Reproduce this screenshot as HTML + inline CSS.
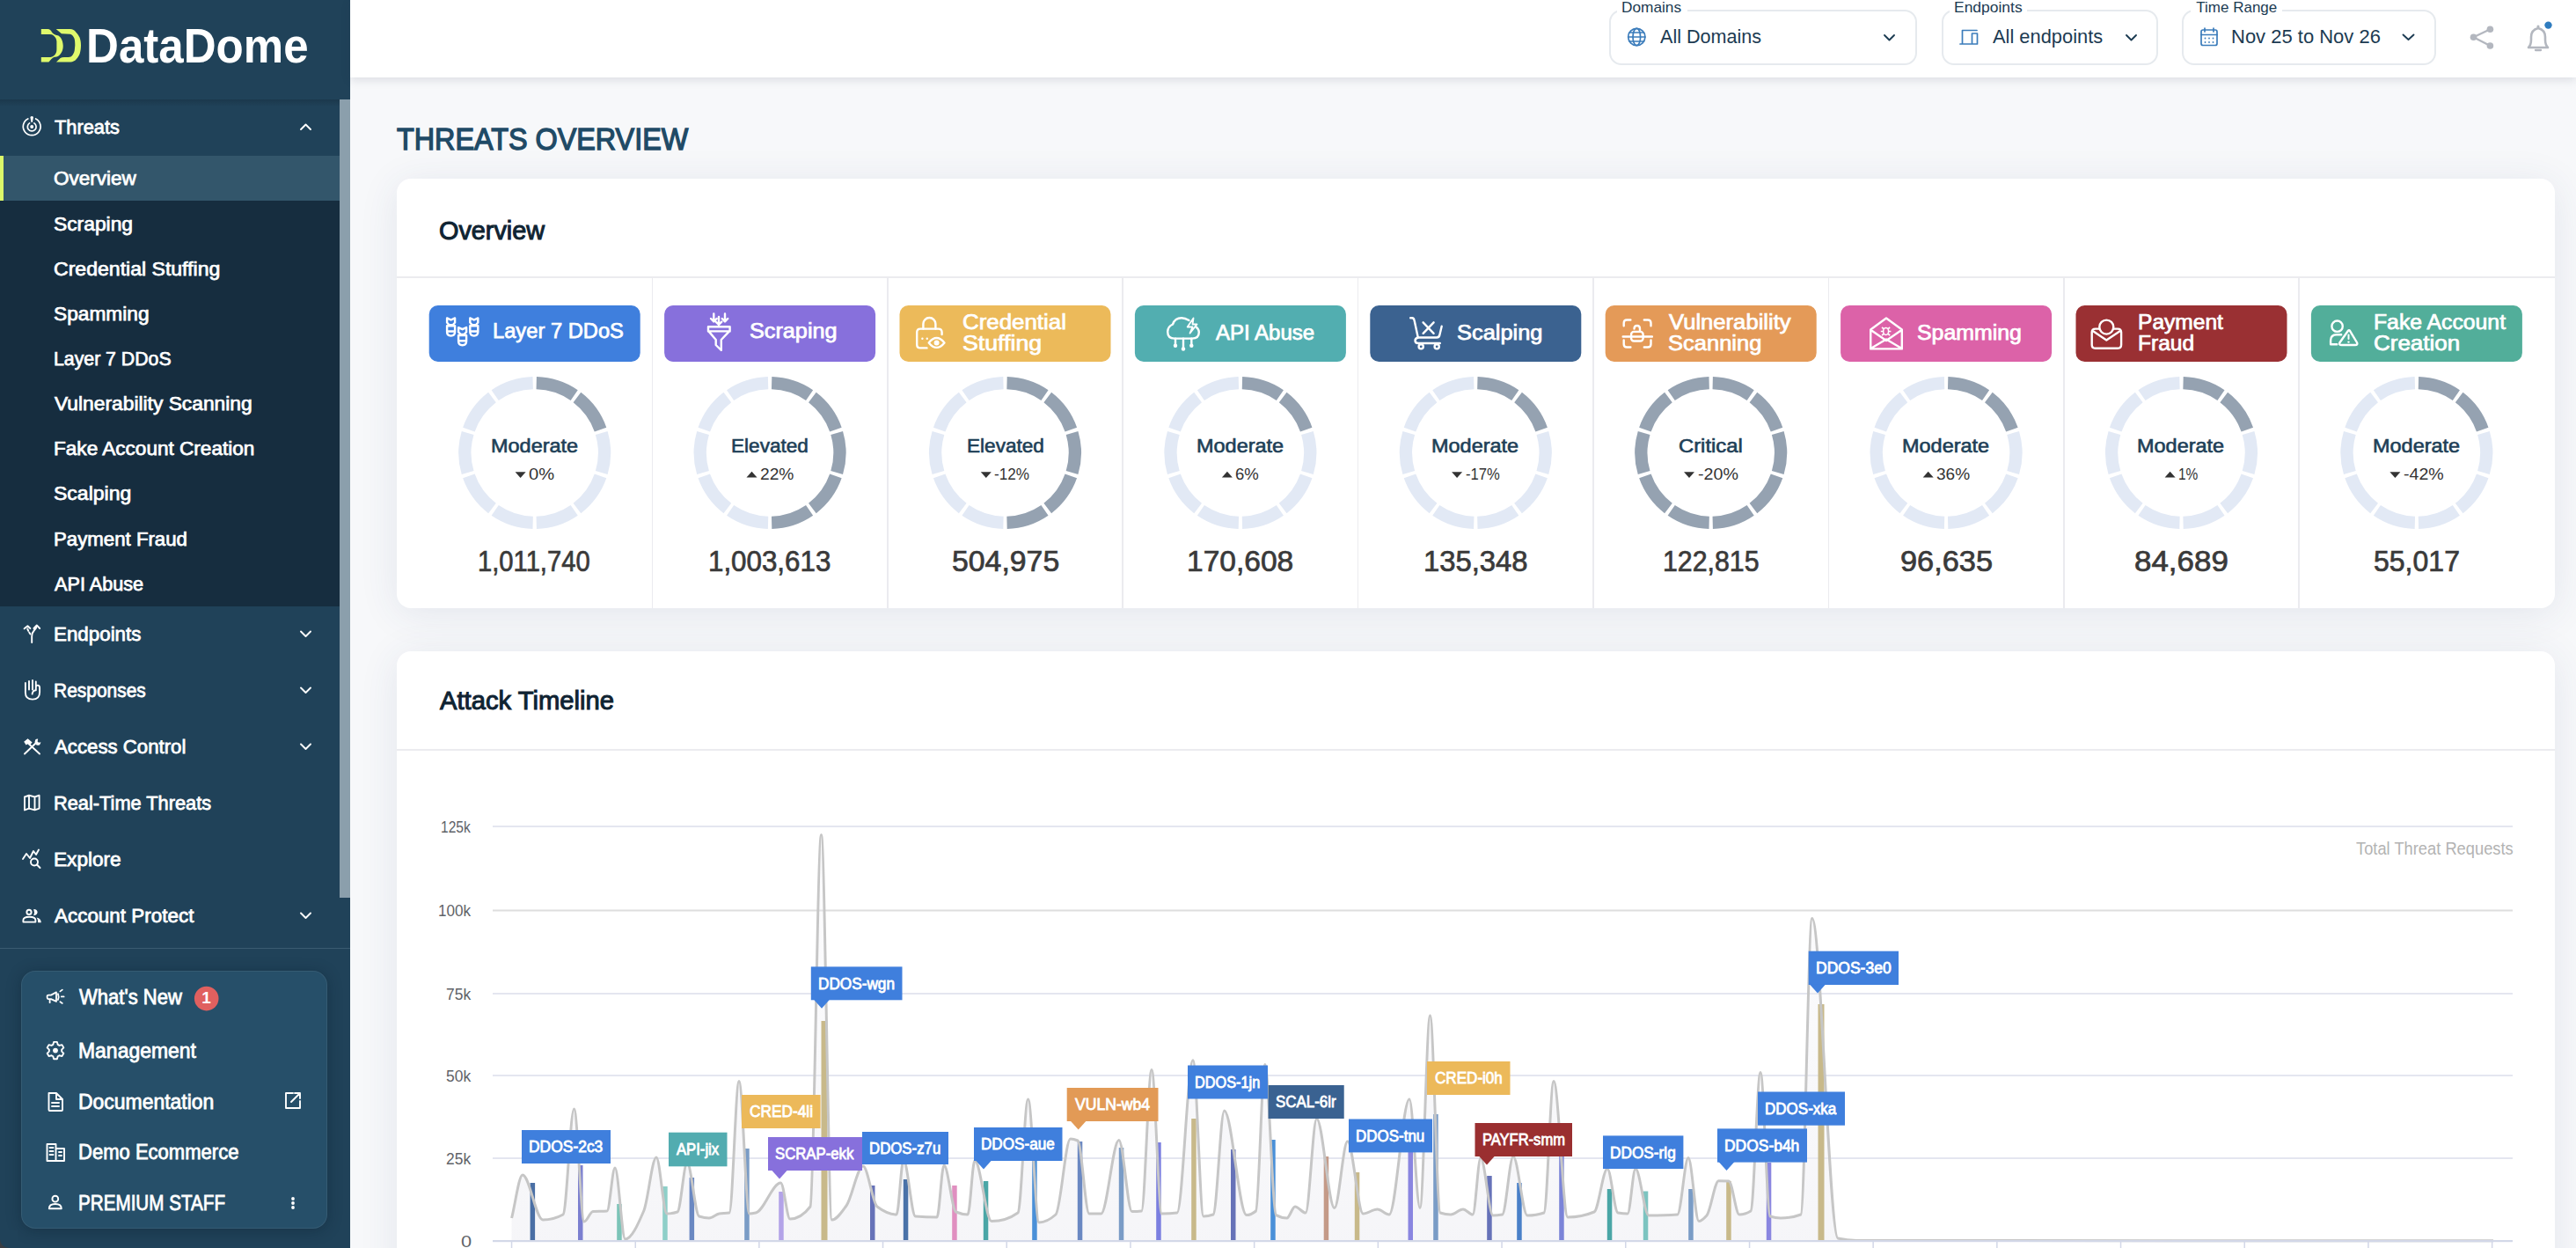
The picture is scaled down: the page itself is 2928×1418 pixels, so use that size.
<!DOCTYPE html>
<html><head><meta charset="utf-8"><title>DataDome - Threats Overview</title>
<style>
html,body{margin:0;padding:0;}
body{width:2928px;height:1418px;overflow:hidden;position:relative;background:#f7f8fa;font-family:"Liberation Sans", sans-serif;}
.a{position:absolute;}
.t{position:absolute;white-space:pre;line-height:1;font-family:"Liberation Sans", sans-serif;transform-origin:0 0;}
</style></head><body>
<!-- sidebar -->
<div class="a" style="left:0;top:0;width:398px;height:1418px;background:#204259;"></div>
<div class="a" style="left:0;top:113px;width:386px;height:8px;background:linear-gradient(#1b384c,#204259);"></div>
<div class="a" style="left:0;top:177px;width:386px;height:512px;background:#162d3f;"></div>
<div class="a" style="left:0;top:177px;width:386px;height:51px;background:#33566b;"></div>
<div class="a" style="left:0;top:177px;width:4px;height:51px;background:#dcf86a;"></div>
<div class="a" style="left:386px;top:113px;width:12px;height:907px;background:#8b9fac;"></div>
<div class="a" style="left:0;top:1076.5px;width:398px;height:1.5px;background:#3b5c72;"></div>
<div class="a" style="left:24px;top:1103px;width:348px;height:293px;box-sizing:border-box;border:1px solid rgba(255,255,255,0.07);border-radius:16px;background:#264f69;box-shadow:0 2px 16px rgba(10,25,40,0.35);"></div>
<div class="a" style="left:0;top:1408px;width:10px;height:10px;background:#3a3d42;"></div><div class="a" style="left:0;top:1398px;width:20px;height:20px;border-bottom-left-radius:10px;background:#204259;"></div>
<!-- header -->
<div class="a" style="left:398px;top:0;width:2530px;height:88px;background:#fff;box-shadow:0 3px 10px rgba(40,50,80,0.13);"></div>
<div class="a" style="left:1829px;top:11px;width:350px;border:2px solid #e6eaee;border-radius:14px;box-sizing:border-box;height:63px;"></div>
<div class="a" style="left:2207px;top:11px;width:246px;border:2px solid #e6eaee;border-radius:14px;box-sizing:border-box;height:63px;"></div>
<div class="a" style="left:2480px;top:11px;width:289px;border:2px solid #e6eaee;border-radius:14px;box-sizing:border-box;height:63px;"></div>
<div class="a" style="left:1838px;top:0;width:80px;height:16px;background:#fff;"></div>
<div class="a" style="left:2216px;top:0;width:88px;height:16px;background:#fff;"></div>
<div class="a" style="left:2490px;top:0;width:104px;height:16px;background:#fff;"></div>
<!-- cards -->
<div class="a" style="left:451px;top:203px;width:2453px;height:488px;border-radius:16px;background:#fff;box-shadow:0 6px 44px rgba(50,70,120,0.10);"></div>
<div class="a" style="left:451px;top:314px;width:2453px;height:1.5px;background:#ebebef;"></div>
<div class="a" style="left:740.6px;top:315px;width:1.5px;height:376px;background:#ebebef;"></div>
<div class="a" style="left:1008.0px;top:315px;width:1.5px;height:376px;background:#ebebef;"></div>
<div class="a" style="left:1275.4px;top:315px;width:1.5px;height:376px;background:#ebebef;"></div>
<div class="a" style="left:1542.8px;top:315px;width:1.5px;height:376px;background:#ebebef;"></div>
<div class="a" style="left:1810.2px;top:315px;width:1.5px;height:376px;background:#ebebef;"></div>
<div class="a" style="left:2077.6px;top:315px;width:1.5px;height:376px;background:#ebebef;"></div>
<div class="a" style="left:2345.0px;top:315px;width:1.5px;height:376px;background:#ebebef;"></div>
<div class="a" style="left:2612.4px;top:315px;width:1.5px;height:376px;background:#ebebef;"></div>
<div class="a" style="left:451px;top:740px;width:2453px;height:720px;border-radius:16px;background:#fff;box-shadow:0 6px 44px rgba(50,70,120,0.10);"></div>
<div class="a" style="left:451px;top:851px;width:2453px;height:1.5px;background:#ebebef;"></div>
<svg class="a" style="left:0;top:0" width="2928" height="1418" viewBox="0 0 2928 1418">
<g transform="translate(46.8,33)" fill="#dff96c"><path d="M0,0 L7.3,0 C10,0 11.5,2 12.1,3.5 C13,5 15,6.5 19.6,7.5 C22,9 24.6,12.5 24.9,18.5 C25,22 24.5,26 20.5,30 C18.5,31.5 16.5,31.7 15.2,31.7 C13.5,32.5 12.5,33 11.7,34 L8.6,37.6 L0,37.6 L0,32 L10.6,32 C13,31.5 15,30 16,28.7 C17.3,27 17.6,25 17.6,23 L17.6,14 C17.3,12 16.8,10.7 16,9.6 C15,8 13.5,6.5 12,6.2 C10.5,5.9 9,5.9 7.7,5.9 L0,5.9 Z"/><path d="M16.9,0 L32.8,0 C36,0 38,1.5 39.4,3.5 C42,6 43.8,9.7 43.8,9.7 C45,13 45.2,16 45.2,18.5 C45.2,22 44.8,25 43.8,28.2 C42.5,31.5 40.5,34 38.5,35.7 C36.5,37 34,37.6 31.9,37.6 L17.2,37.6 L21.8,33 C23,32.3 24.5,31.9 26.2,31.9 L31,31.9 C33,31.9 34.5,31 35.4,29.9 C37,28 38.1,25 38.1,22.8 L38.5,18.5 C38.5,15 38.3,12.5 37.6,10.6 C36.5,8 34.8,5.7 32.8,5.7 L23.1,5.3 Z"/></g>
<g stroke="#fff" fill="none" stroke-linecap="round" stroke-linejoin="round" stroke-width="1.7"><path d="M31.8,134.9 A9.9,9.9 0 1 0 40.6,134.9"/><path d="M33.6,139.9 A4.9,4.9 0 1 0 38.8,139.9"/></g>
<circle cx="36.2" cy="144" r="2" fill="#fff"/><path d="M34.4,133 Q36.2,131 38,133 L36.9,139 L35.5,139 Z" fill="#fff"/>
<path d="M342,147 L347.5,141.5 L353,147" stroke="#fff" fill="none" stroke-linecap="round" stroke-linejoin="round" stroke-width="1.9"/>
<path d="M342,717.5 L347.5,723 L353,717.5" stroke="#fff" fill="none" stroke-linecap="round" stroke-linejoin="round" stroke-width="1.9"/>
<path d="M342,781.5 L347.5,787 L353,781.5" stroke="#fff" fill="none" stroke-linecap="round" stroke-linejoin="round" stroke-width="1.9"/>
<path d="M342,845.5 L347.5,851 L353,845.5" stroke="#fff" fill="none" stroke-linecap="round" stroke-linejoin="round" stroke-width="1.9"/>
<path d="M342,1037.5 L347.5,1043 L353,1037.5" stroke="#fff" fill="none" stroke-linecap="round" stroke-linejoin="round" stroke-width="1.9"/>
<g stroke="#fff" fill="none" stroke-linecap="round" stroke-linejoin="round" stroke-width="1.9"><path d="M36.2,730 V723 Q36.2,719 39,716 Q41.8,713 41.8,711"/><path d="M38.4,714 L41.8,710.4 L45.2,714 M27.6,714.3 L31.4,711.2 L34.4,714"/><path d="M34.5,720.5 L33.2,718.5 M32.2,716.8 L31.2,714.5"/></g>
<g stroke="#fff" fill="none" stroke-linecap="round" stroke-linejoin="round" stroke-width="1.9"><path d="M28.9,776 V787 Q28.9,794.6 37,794.6 Q45.1,794.6 45.1,786.5 V781.5 Q45.1,778.6 42.8,778.6 Q40.8,778.6 40.8,781 V784.2 Q37,784.6 36.6,788.6 M33,783.5 V774 M37,783.5 V773 M40.8,781 V774.5"/></g>
<g stroke="#fff" fill="none" stroke-linecap="round" stroke-linejoin="round" stroke-width="1.9"><path d="M32.5,845 L45,856.5 M28,856.5 L40.5,844.5"/></g>
<path d="M27.2,842.8 L31.6,839.2 L36.6,843.4 L33.8,846.8 L31.5,845.2 L29.6,846.6 Z" fill="#fff"/>
<path d="M40.2,840.6 Q38.6,845 41.6,846.6 Q45.6,847.8 46.4,843.2 L44,843.8 L42.6,842.6 L43.2,839.4 Q41.4,839.2 40.2,840.6 Z" fill="#fff"/>
<g stroke="#fff" fill="none" stroke-linecap="round" stroke-linejoin="round" stroke-width="1.9"><path d="M28,905.5 L33,903.7 L39.5,905.5 L44.6,903.7 V918.6 L39.5,920.4 L33,918.6 L28,920.4 Z M33,903.7 V918.6 M39.5,905.5 V920.4"/></g>
<g stroke="#fff" fill="none" stroke-linecap="round" stroke-linejoin="round" stroke-width="1.9"><path d="M26,976 L30,970 L34,975 L38,967 L41,971 L44,965.5"/><circle cx="39" cy="979.5" r="4"/><path d="M42,982.5 L45.5,986"/></g>
<g stroke="#fff" fill="none" stroke-linecap="round" stroke-linejoin="round" stroke-width="1.9"><circle cx="33" cy="1036.4" r="2.6"/><path d="M26.4,1047.6 V1045.6 Q26.4,1041.8 33.4,1041.8 Q40.4,1041.8 40.4,1045.6 V1047.6 Z"/></g>
<path d="M38.2,1033 Q42.6,1033.4 42.6,1036.6 Q42.6,1039.6 38.2,1040.2 Q39.8,1036.6 38.2,1033 Z M41.6,1042.4 Q46.8,1043.6 46.8,1048.2 H43.2 Q43.4,1044.6 41.6,1042.4 Z" fill="#fff"/>
<g stroke="#fff" fill="none" stroke-linecap="round" stroke-linejoin="round" stroke-width="1.8"><path d="M53.6,1131.6 Q53.4,1135.2 55.2,1135.2 H58 L64,1137.8 V1127.4 L58,1130.6 H55.2 Q53.7,1130.6 53.6,1131.6 Z M56.6,1135.4 V1139.2 M65.9,1129.2 Q67.4,1132.6 65.9,1136 M68.4,1126.4 L70.8,1124.6 M69.8,1132.4 H72.6 M68.4,1138.2 L70.8,1139.9"/></g>
<g stroke="#fff" fill="none" stroke-linecap="round" stroke-linejoin="round" stroke-width="1.9"><path d="M60.30,1186.92 L61.11,1183.88 L64.89,1183.88 L65.70,1186.92 L67.43,1187.93 L70.47,1187.11 L72.36,1190.38 L70.13,1192.60 L70.13,1194.60 L72.36,1196.82 L70.47,1200.09 L67.43,1199.27 L65.70,1200.28 L64.89,1203.32 L61.11,1203.32 L60.30,1200.28 L58.57,1199.27 L55.53,1200.09 L53.64,1196.82 L55.87,1194.60 L55.87,1192.60 L53.64,1190.38 L55.53,1187.11 L58.57,1187.93 Z"/></g><circle cx="63" cy="1193.6" r="2.9" fill="#fff"/>
<g stroke="#fff" fill="none" stroke-linecap="round" stroke-linejoin="round" stroke-width="1.9"><path d="M55.5,1242 H64 L71,1249 V1261 Q71,1262 70,1262 H56.5 Q55.5,1262 55.5,1261 Z M64,1242 V1249 H71 M59,1253 H67 M59,1257 H67"/></g>
<g stroke="#fff" fill="none" stroke-linecap="round" stroke-linejoin="round" stroke-width="1.9"><path d="M333,1242 H325 V1259 H341 V1251 M331,1252 L341,1242 M335,1242 H341 V1248"/></g>
<g stroke="#fff" fill="none" stroke-linecap="round" stroke-linejoin="round" stroke-width="1.9"><path d="M53.5,1319 V1300 H63.5 V1319 Z M63.5,1305 H73 V1319 H53.5 M56.5,1304 H60.5 M56.5,1308 H60.5 M56.5,1312 H60.5 M67,1309 H70 M67,1313 H70"/></g>
<g stroke="#fff" fill="none" stroke-linecap="round" stroke-linejoin="round" stroke-width="1.9"><circle cx="62.8" cy="1362.2" r="3.4"/><path d="M55.8,1373.2 Q55.8,1368 62.8,1368 Q69.8,1368 69.8,1373.2 Z"/></g>
<circle cx="333" cy="1362" r="1.9" fill="#fff"/>
<circle cx="333" cy="1367" r="1.9" fill="#fff"/>
<circle cx="333" cy="1372" r="1.9" fill="#fff"/>
<circle cx="234.7" cy="1134.6" r="13.8" fill="#e0605f"/>
<g stroke="#3b7cbb" fill="none" stroke-width="1.7" stroke-linecap="round" stroke-linejoin="round"><circle cx="1860.3" cy="42" r="9.6"/><ellipse cx="1860.3" cy="42" rx="4.3" ry="9.6"/><path d="M1850.7,42 H1869.9 M1852,37 H1868.6 M1852,47 H1868.6"/></g>
<g stroke="#3b7cbb" fill="none" stroke-width="1.7" stroke-linecap="round" stroke-linejoin="round"><path d="M2228,50 H2240 M2230.5,50 V34.5 H2247 M2241.5,38 H2247.5 V50 H2241.5 Z"/></g>
<g stroke="#3b7cbb" fill="none" stroke-width="1.7" stroke-linecap="round" stroke-linejoin="round"><rect x="2502" y="34" width="18" height="17.5" rx="2"/><path d="M2502,39.5 H2520 M2506,32 V36 M2516,32 V36"/></g>
<circle cx="2506.5" cy="43.5" r="0.9" fill="#3b7cbb"/>
<circle cx="2511" cy="43.5" r="0.9" fill="#3b7cbb"/>
<circle cx="2515.5" cy="43.5" r="0.9" fill="#3b7cbb"/>
<circle cx="2506.5" cy="48" r="0.9" fill="#3b7cbb"/>
<circle cx="2511" cy="48" r="0.9" fill="#3b7cbb"/>
<circle cx="2515.5" cy="48" r="0.9" fill="#3b7cbb"/>
<path d="M2142,40 L2147.5,45.5 L2153,40" stroke="#1c3b52" fill="none" stroke-width="1.9" stroke-linecap="round" stroke-linejoin="round"/>
<path d="M2417,40 L2422.5,45.5 L2428,40" stroke="#1c3b52" fill="none" stroke-width="1.9" stroke-linecap="round" stroke-linejoin="round"/>
<path d="M2731.5,39.5 L2737.5,45 L2743.5,39.5" stroke="#1c3b52" fill="none" stroke-width="1.9" stroke-linecap="round" stroke-linejoin="round"/>
<g fill="#b3b7bf"><circle cx="2830.4" cy="33.2" r="3.8"/><circle cx="2830.4" cy="52" r="3.8"/><circle cx="2811.5" cy="42.3" r="3.8"/></g>
<path d="M2830.4,33.2 L2811.5,42.3 L2830.4,52" stroke="#b3b7bf" stroke-width="2.3" fill="none"/>
<path d="M2874,54 Q2877,51 2877,45 V42 Q2877,34 2885,32 Q2893,34 2893,42 V45 Q2893,51 2896,54 Z" fill="none" stroke="#b3b7bf" stroke-width="2.6" stroke-linejoin="round"/>
<path d="M2882,57 H2888" stroke="#b3b7bf" stroke-width="2.3" stroke-linecap="round"/><circle cx="2885" cy="30" r="1.6" fill="#b3b7bf"/>
<circle cx="2896.5" cy="28.6" r="4.2" fill="#2f7cbf"/>
<rect x="487.7" y="347" width="240" height="64" rx="10" fill="#3f7fdd"/>
<rect x="755.1" y="347" width="240" height="64" rx="10" fill="#8770dc"/>
<rect x="1022.5" y="347" width="240" height="64" rx="10" fill="#ecba5a"/>
<rect x="1289.9" y="347" width="240" height="64" rx="10" fill="#52aeb0"/>
<rect x="1557.3" y="347" width="240" height="64" rx="10" fill="#3b6290"/>
<rect x="1824.7" y="347" width="240" height="64" rx="10" fill="#e49a58"/>
<rect x="2092.1" y="347" width="240" height="64" rx="10" fill="#dc62a8"/>
<rect x="2359.5" y="347" width="240" height="64" rx="10" fill="#9a3033"/>
<rect x="2626.9" y="347" width="240" height="64" rx="10" fill="#52ae9a"/>
<g stroke="#fff" fill="none" stroke-width="2.4" stroke-linecap="round" stroke-linejoin="round" stroke-width="2.2"><path d="M508.1,361.40000000000003 L512.6,363.5 L517.1,361.40000000000003 V366.5 L514.7,369.2 H510.5 L508.1,366.5 Z"/><path d="M508.1,370.3 H517.1 V377.1 Q517.1,381.6 512.6,381.6 Q508.1,381.6 508.1,377.1 Z M508.1,376.5 H517.1"/><path d="M521.1,372.1 L525.6,374.2 L530.1,372.1 V377.2 L527.7,379.9 H523.5 L521.1,377.2 Z"/><path d="M521.1,381 H530.1 V387.8 Q530.1,392.3 525.6,392.3 Q521.1,392.3 521.1,387.8 Z M521.1,387.2 H530.1"/><path d="M534.3000000000001,361.40000000000003 L538.8000000000001,363.5 L543.3000000000001,361.40000000000003 V366.5 L540.9000000000001,369.2 H536.7 L534.3000000000001,366.5 Z"/><path d="M534.3000000000001,370.3 H543.3000000000001 V377.1 Q543.3000000000001,381.6 538.8000000000001,381.6 Q534.3000000000001,381.6 534.3000000000001,377.1 Z M534.3000000000001,376.5 H543.3000000000001"/></g>
<g stroke="#fff" fill="none" stroke-width="2.4" stroke-linecap="round" stroke-linejoin="round" stroke-width="2.3"><path d="M805,371.2 H829.6 V376.4 H805 Z M805.5,376.4 L813.7,386 V392 L819.8,398 V386 L829,376.4"/><path d="M811.3,356.5 V365 M808,362 L811.3,365.4 L814.6,362 M817,360 V369 M813.7,365.6 L817,369 L820.3,365.6 M824,356.5 V365 M820.7,362 L824,365.4 L827.3,362"/></g>
<g stroke="#fff" fill="none" stroke-width="2.4" stroke-linecap="round" stroke-linejoin="round"><path d="M1049.4,373.6 V368 A7,7 0 0 1 1063.4,368 V373.6"/><path d="M1070.6,380 V377.6 Q1070.6,373.6 1066.6,373.6 H1046.2 Q1042.2,373.6 1042.2,377.6 V391.4 Q1042.2,395.4 1046.2,395.4 H1053.5"/><path d="M1055.7,389.4 Q1064.6,378.5 1073.5,389.4 Q1064.6,400.3 1055.7,389.4 Z"/><circle cx="1064.6" cy="389.4" r="1.8" fill="#fff"/></g><circle cx="1048.4" cy="384.7" r="1.2" fill="#fff"/><circle cx="1053.8" cy="384.7" r="1.2" fill="#fff"/>
<g stroke="#fff" fill="none" stroke-width="2.4" stroke-linecap="round" stroke-linejoin="round"><path d="M1351.5,364 Q1347,361.3 1343,361.3 Q1335.5,361.3 1333,368.5 Q1327.2,371 1327.2,377 Q1327.2,384.6 1335,384.6 H1355 Q1362.8,384.6 1362.8,377.5 Q1362.8,374 1359.5,371.5"/><path d="M1356.5,361.5 L1349.7,371.5 H1355.5 L1352.5,378.6 L1360.5,368.5 H1355.5 Z" stroke-width="1.8"/><path d="M1336,384.6 V391 M1345,384.6 V395 M1354.3,384.6 V391"/></g><g fill="#fff"><circle cx="1336" cy="392.7" r="2.2"/><circle cx="1345" cy="396.5" r="2.2"/><circle cx="1354.3" cy="392.7" r="2.2"/></g>
<g stroke="#fff" fill="none" stroke-width="2.4" stroke-linecap="round" stroke-linejoin="round"><path d="M1603.2,361.3 H1605 Q1607.2,361.5 1607.6,364 L1611.8,383.5 H1633 Q1636,383.5 1636.5,380 L1638.7,370.7"/><path d="M1611.8,383.5 Q1608.5,384.5 1608.5,387 Q1608.5,390 1612,390 H1636.8"/><circle cx="1615.2" cy="393.8" r="2.6"/><circle cx="1633.2" cy="393.8" r="2.6"/><path d="M1617.6,366.3 L1629.6,378.8 M1629.6,366.3 L1617.6,378.8"/></g>
<g stroke="#fff" fill="none" stroke-width="2.4" stroke-linecap="round" stroke-linejoin="round"><path d="M1853.4,363.5 H1849 Q1845.7,363.5 1845.7,367 V370.2 M1868.8,363.5 H1873 Q1876.5,363.5 1876.5,367 V370.2 M1845.7,386.5 V391 Q1845.7,394.5 1849,394.5 H1853.4 M1876.5,386.5 V391 Q1876.5,394.5 1873,394.5 H1868.8 M1844.7,382.5 H1877.9"/><rect x="1854.1" y="376.9" width="13.5" height="10.6" rx="3"/><path d="M1857.5,373.5 Q1857.5,370 1860.8,370 Q1864,370 1864,373.5 V376.9"/></g>
<g stroke="#fff" fill="none" stroke-width="2.4" stroke-linecap="round" stroke-linejoin="round"><path d="M2126.25,374.5 L2144,361.5 L2161.8,374.5 V396.4 H2126.25 Z M2128,376 L2144,387 L2160,376 M2128,395 L2144,385.5 L2160,395"/></g><g stroke="#fff" fill="none" stroke-width="1.6"><ellipse cx="2143.6" cy="376.5" rx="3" ry="4"/><path d="M2139,372 L2141,373.5 M2148.2,372 L2146.2,373.5 M2137.8,376.5 H2140.6 M2146.6,376.5 H2149.4 M2139,381 L2141,379.5 M2148.2,381 L2146.2,379.5"/></g>
<g stroke="#fff" fill="none" stroke-width="2.4" stroke-linecap="round" stroke-linejoin="round"><circle cx="2394.3" cy="371.6" r="8"/><path d="M2386,373.6 H2381.7 Q2377.7,373.6 2377.7,377.6 V391.7 Q2377.7,395.7 2381.7,395.7 H2407.1 Q2411.1,395.7 2411.1,391.7 V377.6 Q2411.1,373.6 2407.1,373.6 H2402.6"/><path d="M2379.5,376.5 L2394.3,386.5 L2409.2,376.5"/></g>
<g stroke="#fff" fill="none" stroke-width="2.4" stroke-linecap="round" stroke-linejoin="round"><circle cx="2656.6" cy="370.7" r="6.2"/><path d="M2661.2,380.3 H2656 Q2649.1,380.3 2649.1,387 V391.3 H2656.3"/><path d="M2669,375.8 Q2670,374.5 2671,375.8 L2679.2,389.5 Q2680,392 2677,392 H2661.5 Q2658.5,392 2659.3,389.5 Z"/><path d="M2669.5,380.5 V385" stroke-width="2"/></g><circle cx="2669.5" cy="388.6" r="1.2" fill="#fff"/>
<path d="M609.91,428.03 A86.5,86.5 0 0 1 656.74,443.24 L648.63,455.02 A72.2,72.2 0 0 0 609.55,442.32 Z" fill="#95a2b1"/>
<path d="M660.32,445.84 A86.5,86.5 0 0 1 689.26,485.67 L675.77,490.44 A72.2,72.2 0 0 0 651.62,457.19 Z" fill="#95a2b1"/>
<path d="M690.62,489.88 A86.5,86.5 0 0 1 690.62,539.12 L676.91,535.05 A72.2,72.2 0 0 0 676.91,493.95 Z" fill="#e2e9f5"/>
<path d="M689.26,543.33 A86.5,86.5 0 0 1 660.32,583.16 L651.62,571.81 A72.2,72.2 0 0 0 675.77,538.56 Z" fill="#e2e9f5"/>
<path d="M656.74,585.76 A86.5,86.5 0 0 1 609.91,600.97 L609.55,586.68 A72.2,72.2 0 0 0 648.63,573.98 Z" fill="#e2e9f5"/>
<path d="M605.49,600.97 A86.5,86.5 0 0 1 558.66,585.76 L566.77,573.98 A72.2,72.2 0 0 0 605.85,586.68 Z" fill="#e2e9f5"/>
<path d="M555.08,583.16 A86.5,86.5 0 0 1 526.14,543.33 L539.63,538.56 A72.2,72.2 0 0 0 563.78,571.81 Z" fill="#e2e9f5"/>
<path d="M524.78,539.12 A86.5,86.5 0 0 1 524.78,489.88 L538.49,493.95 A72.2,72.2 0 0 0 538.49,535.05 Z" fill="#e2e9f5"/>
<path d="M526.14,485.67 A86.5,86.5 0 0 1 555.08,445.84 L563.78,457.19 A72.2,72.2 0 0 0 539.63,490.44 Z" fill="#e2e9f5"/>
<path d="M558.66,443.24 A86.5,86.5 0 0 1 605.49,428.03 L605.85,442.32 A72.2,72.2 0 0 0 566.77,455.02 Z" fill="#e2e9f5"/>
<path d="M585.6,536.2 H597.6 L591.6,543 Z" fill="#333"/>
<path d="M877.31,428.03 A86.5,86.5 0 0 1 924.14,443.24 L916.03,455.02 A72.2,72.2 0 0 0 876.95,442.32 Z" fill="#95a2b1"/>
<path d="M927.72,445.84 A86.5,86.5 0 0 1 956.66,485.67 L943.17,490.44 A72.2,72.2 0 0 0 919.02,457.19 Z" fill="#95a2b1"/>
<path d="M958.02,489.88 A86.5,86.5 0 0 1 958.02,539.12 L944.31,535.05 A72.2,72.2 0 0 0 944.31,493.95 Z" fill="#95a2b1"/>
<path d="M956.66,543.33 A86.5,86.5 0 0 1 927.72,583.16 L919.02,571.81 A72.2,72.2 0 0 0 943.17,538.56 Z" fill="#95a2b1"/>
<path d="M924.14,585.76 A86.5,86.5 0 0 1 877.31,600.97 L876.95,586.68 A72.2,72.2 0 0 0 916.03,573.98 Z" fill="#95a2b1"/>
<path d="M872.89,600.97 A86.5,86.5 0 0 1 826.06,585.76 L834.17,573.98 A72.2,72.2 0 0 0 873.25,586.68 Z" fill="#e2e9f5"/>
<path d="M822.48,583.16 A86.5,86.5 0 0 1 793.54,543.33 L807.03,538.56 A72.2,72.2 0 0 0 831.18,571.81 Z" fill="#e2e9f5"/>
<path d="M792.18,539.12 A86.5,86.5 0 0 1 792.18,489.88 L805.89,493.95 A72.2,72.2 0 0 0 805.89,535.05 Z" fill="#e2e9f5"/>
<path d="M793.54,485.67 A86.5,86.5 0 0 1 822.48,445.84 L831.18,457.19 A72.2,72.2 0 0 0 807.03,490.44 Z" fill="#e2e9f5"/>
<path d="M826.06,443.24 A86.5,86.5 0 0 1 872.89,428.03 L873.25,442.32 A72.2,72.2 0 0 0 834.17,455.02 Z" fill="#e2e9f5"/>
<path d="M848.5,542.5 H860.5 L854.5,535.7 Z" fill="#333"/>
<path d="M1144.71,428.03 A86.5,86.5 0 0 1 1191.54,443.24 L1183.43,455.02 A72.2,72.2 0 0 0 1144.35,442.32 Z" fill="#95a2b1"/>
<path d="M1195.12,445.84 A86.5,86.5 0 0 1 1224.06,485.67 L1210.57,490.44 A72.2,72.2 0 0 0 1186.42,457.19 Z" fill="#95a2b1"/>
<path d="M1225.42,489.88 A86.5,86.5 0 0 1 1225.42,539.12 L1211.71,535.05 A72.2,72.2 0 0 0 1211.71,493.95 Z" fill="#95a2b1"/>
<path d="M1224.06,543.33 A86.5,86.5 0 0 1 1195.12,583.16 L1186.42,571.81 A72.2,72.2 0 0 0 1210.57,538.56 Z" fill="#95a2b1"/>
<path d="M1191.54,585.76 A86.5,86.5 0 0 1 1144.71,600.97 L1144.35,586.68 A72.2,72.2 0 0 0 1183.43,573.98 Z" fill="#95a2b1"/>
<path d="M1140.29,600.97 A86.5,86.5 0 0 1 1093.46,585.76 L1101.57,573.98 A72.2,72.2 0 0 0 1140.65,586.68 Z" fill="#e2e9f5"/>
<path d="M1089.88,583.16 A86.5,86.5 0 0 1 1060.94,543.33 L1074.43,538.56 A72.2,72.2 0 0 0 1098.58,571.81 Z" fill="#e2e9f5"/>
<path d="M1059.58,539.12 A86.5,86.5 0 0 1 1059.58,489.88 L1073.29,493.95 A72.2,72.2 0 0 0 1073.29,535.05 Z" fill="#e2e9f5"/>
<path d="M1060.94,485.67 A86.5,86.5 0 0 1 1089.88,445.84 L1098.58,457.19 A72.2,72.2 0 0 0 1074.43,490.44 Z" fill="#e2e9f5"/>
<path d="M1093.46,443.24 A86.5,86.5 0 0 1 1140.29,428.03 L1140.65,442.32 A72.2,72.2 0 0 0 1101.57,455.02 Z" fill="#e2e9f5"/>
<path d="M1114.8,536.2 H1126.8 L1120.8,543 Z" fill="#333"/>
<path d="M1412.11,428.03 A86.5,86.5 0 0 1 1458.94,443.24 L1450.83,455.02 A72.2,72.2 0 0 0 1411.75,442.32 Z" fill="#95a2b1"/>
<path d="M1462.52,445.84 A86.5,86.5 0 0 1 1491.46,485.67 L1477.97,490.44 A72.2,72.2 0 0 0 1453.82,457.19 Z" fill="#95a2b1"/>
<path d="M1492.82,489.88 A86.5,86.5 0 0 1 1492.82,539.12 L1479.11,535.05 A72.2,72.2 0 0 0 1479.11,493.95 Z" fill="#e2e9f5"/>
<path d="M1491.46,543.33 A86.5,86.5 0 0 1 1462.52,583.16 L1453.82,571.81 A72.2,72.2 0 0 0 1477.97,538.56 Z" fill="#e2e9f5"/>
<path d="M1458.94,585.76 A86.5,86.5 0 0 1 1412.11,600.97 L1411.75,586.68 A72.2,72.2 0 0 0 1450.83,573.98 Z" fill="#e2e9f5"/>
<path d="M1407.69,600.97 A86.5,86.5 0 0 1 1360.86,585.76 L1368.97,573.98 A72.2,72.2 0 0 0 1408.05,586.68 Z" fill="#e2e9f5"/>
<path d="M1357.28,583.16 A86.5,86.5 0 0 1 1328.34,543.33 L1341.83,538.56 A72.2,72.2 0 0 0 1365.98,571.81 Z" fill="#e2e9f5"/>
<path d="M1326.98,539.12 A86.5,86.5 0 0 1 1326.98,489.88 L1340.69,493.95 A72.2,72.2 0 0 0 1340.69,535.05 Z" fill="#e2e9f5"/>
<path d="M1328.34,485.67 A86.5,86.5 0 0 1 1357.28,445.84 L1365.98,457.19 A72.2,72.2 0 0 0 1341.83,490.44 Z" fill="#e2e9f5"/>
<path d="M1360.86,443.24 A86.5,86.5 0 0 1 1407.69,428.03 L1408.05,442.32 A72.2,72.2 0 0 0 1368.97,455.02 Z" fill="#e2e9f5"/>
<path d="M1388.9,542.5 H1400.9 L1394.9,535.7 Z" fill="#333"/>
<path d="M1679.51,428.03 A86.5,86.5 0 0 1 1726.34,443.24 L1718.23,455.02 A72.2,72.2 0 0 0 1679.15,442.32 Z" fill="#95a2b1"/>
<path d="M1729.92,445.84 A86.5,86.5 0 0 1 1758.86,485.67 L1745.37,490.44 A72.2,72.2 0 0 0 1721.22,457.19 Z" fill="#95a2b1"/>
<path d="M1760.22,489.88 A86.5,86.5 0 0 1 1760.22,539.12 L1746.51,535.05 A72.2,72.2 0 0 0 1746.51,493.95 Z" fill="#e2e9f5"/>
<path d="M1758.86,543.33 A86.5,86.5 0 0 1 1729.92,583.16 L1721.22,571.81 A72.2,72.2 0 0 0 1745.37,538.56 Z" fill="#e2e9f5"/>
<path d="M1726.34,585.76 A86.5,86.5 0 0 1 1679.51,600.97 L1679.15,586.68 A72.2,72.2 0 0 0 1718.23,573.98 Z" fill="#e2e9f5"/>
<path d="M1675.09,600.97 A86.5,86.5 0 0 1 1628.26,585.76 L1636.37,573.98 A72.2,72.2 0 0 0 1675.45,586.68 Z" fill="#e2e9f5"/>
<path d="M1624.68,583.16 A86.5,86.5 0 0 1 1595.74,543.33 L1609.23,538.56 A72.2,72.2 0 0 0 1633.38,571.81 Z" fill="#e2e9f5"/>
<path d="M1594.38,539.12 A86.5,86.5 0 0 1 1594.38,489.88 L1608.09,493.95 A72.2,72.2 0 0 0 1608.09,535.05 Z" fill="#e2e9f5"/>
<path d="M1595.74,485.67 A86.5,86.5 0 0 1 1624.68,445.84 L1633.38,457.19 A72.2,72.2 0 0 0 1609.23,490.44 Z" fill="#e2e9f5"/>
<path d="M1628.26,443.24 A86.5,86.5 0 0 1 1675.09,428.03 L1675.45,442.32 A72.2,72.2 0 0 0 1636.37,455.02 Z" fill="#e2e9f5"/>
<path d="M1650.1,536.2 H1662.1 L1656.1,543 Z" fill="#333"/>
<path d="M1946.91,428.03 A86.5,86.5 0 0 1 1993.74,443.24 L1985.63,455.02 A72.2,72.2 0 0 0 1946.55,442.32 Z" fill="#95a2b1"/>
<path d="M1997.32,445.84 A86.5,86.5 0 0 1 2026.26,485.67 L2012.77,490.44 A72.2,72.2 0 0 0 1988.62,457.19 Z" fill="#95a2b1"/>
<path d="M2027.62,489.88 A86.5,86.5 0 0 1 2027.62,539.12 L2013.91,535.05 A72.2,72.2 0 0 0 2013.91,493.95 Z" fill="#95a2b1"/>
<path d="M2026.26,543.33 A86.5,86.5 0 0 1 1997.32,583.16 L1988.62,571.81 A72.2,72.2 0 0 0 2012.77,538.56 Z" fill="#95a2b1"/>
<path d="M1993.74,585.76 A86.5,86.5 0 0 1 1946.91,600.97 L1946.55,586.68 A72.2,72.2 0 0 0 1985.63,573.98 Z" fill="#95a2b1"/>
<path d="M1942.49,600.97 A86.5,86.5 0 0 1 1895.66,585.76 L1903.77,573.98 A72.2,72.2 0 0 0 1942.85,586.68 Z" fill="#95a2b1"/>
<path d="M1892.08,583.16 A86.5,86.5 0 0 1 1863.14,543.33 L1876.63,538.56 A72.2,72.2 0 0 0 1900.78,571.81 Z" fill="#95a2b1"/>
<path d="M1861.78,539.12 A86.5,86.5 0 0 1 1861.78,489.88 L1875.49,493.95 A72.2,72.2 0 0 0 1875.49,535.05 Z" fill="#95a2b1"/>
<path d="M1863.14,485.67 A86.5,86.5 0 0 1 1892.08,445.84 L1900.78,457.19 A72.2,72.2 0 0 0 1876.63,490.44 Z" fill="#95a2b1"/>
<path d="M1895.66,443.24 A86.5,86.5 0 0 1 1942.49,428.03 L1942.85,442.32 A72.2,72.2 0 0 0 1903.77,455.02 Z" fill="#95a2b1"/>
<path d="M1914.0,536.2 H1926.0 L1920.0,543 Z" fill="#333"/>
<path d="M2214.31,428.03 A86.5,86.5 0 0 1 2261.14,443.24 L2253.03,455.02 A72.2,72.2 0 0 0 2213.95,442.32 Z" fill="#95a2b1"/>
<path d="M2264.72,445.84 A86.5,86.5 0 0 1 2293.66,485.67 L2280.17,490.44 A72.2,72.2 0 0 0 2256.02,457.19 Z" fill="#95a2b1"/>
<path d="M2295.02,489.88 A86.5,86.5 0 0 1 2295.02,539.12 L2281.31,535.05 A72.2,72.2 0 0 0 2281.31,493.95 Z" fill="#e2e9f5"/>
<path d="M2293.66,543.33 A86.5,86.5 0 0 1 2264.72,583.16 L2256.02,571.81 A72.2,72.2 0 0 0 2280.17,538.56 Z" fill="#e2e9f5"/>
<path d="M2261.14,585.76 A86.5,86.5 0 0 1 2214.31,600.97 L2213.95,586.68 A72.2,72.2 0 0 0 2253.03,573.98 Z" fill="#e2e9f5"/>
<path d="M2209.89,600.97 A86.5,86.5 0 0 1 2163.06,585.76 L2171.17,573.98 A72.2,72.2 0 0 0 2210.25,586.68 Z" fill="#e2e9f5"/>
<path d="M2159.48,583.16 A86.5,86.5 0 0 1 2130.54,543.33 L2144.03,538.56 A72.2,72.2 0 0 0 2168.18,571.81 Z" fill="#e2e9f5"/>
<path d="M2129.18,539.12 A86.5,86.5 0 0 1 2129.18,489.88 L2142.89,493.95 A72.2,72.2 0 0 0 2142.89,535.05 Z" fill="#e2e9f5"/>
<path d="M2130.54,485.67 A86.5,86.5 0 0 1 2159.48,445.84 L2168.18,457.19 A72.2,72.2 0 0 0 2144.03,490.44 Z" fill="#e2e9f5"/>
<path d="M2163.06,443.24 A86.5,86.5 0 0 1 2209.89,428.03 L2210.25,442.32 A72.2,72.2 0 0 0 2171.17,455.02 Z" fill="#e2e9f5"/>
<path d="M2185.7,542.5 H2197.7 L2191.7,535.7 Z" fill="#333"/>
<path d="M2481.71,428.03 A86.5,86.5 0 0 1 2528.54,443.24 L2520.43,455.02 A72.2,72.2 0 0 0 2481.35,442.32 Z" fill="#95a2b1"/>
<path d="M2532.12,445.84 A86.5,86.5 0 0 1 2561.06,485.67 L2547.57,490.44 A72.2,72.2 0 0 0 2523.42,457.19 Z" fill="#95a2b1"/>
<path d="M2562.42,489.88 A86.5,86.5 0 0 1 2562.42,539.12 L2548.71,535.05 A72.2,72.2 0 0 0 2548.71,493.95 Z" fill="#e2e9f5"/>
<path d="M2561.06,543.33 A86.5,86.5 0 0 1 2532.12,583.16 L2523.42,571.81 A72.2,72.2 0 0 0 2547.57,538.56 Z" fill="#e2e9f5"/>
<path d="M2528.54,585.76 A86.5,86.5 0 0 1 2481.71,600.97 L2481.35,586.68 A72.2,72.2 0 0 0 2520.43,573.98 Z" fill="#e2e9f5"/>
<path d="M2477.29,600.97 A86.5,86.5 0 0 1 2430.46,585.76 L2438.57,573.98 A72.2,72.2 0 0 0 2477.65,586.68 Z" fill="#e2e9f5"/>
<path d="M2426.88,583.16 A86.5,86.5 0 0 1 2397.94,543.33 L2411.43,538.56 A72.2,72.2 0 0 0 2435.58,571.81 Z" fill="#e2e9f5"/>
<path d="M2396.58,539.12 A86.5,86.5 0 0 1 2396.58,489.88 L2410.29,493.95 A72.2,72.2 0 0 0 2410.29,535.05 Z" fill="#e2e9f5"/>
<path d="M2397.94,485.67 A86.5,86.5 0 0 1 2426.88,445.84 L2435.58,457.19 A72.2,72.2 0 0 0 2411.43,490.44 Z" fill="#e2e9f5"/>
<path d="M2430.46,443.24 A86.5,86.5 0 0 1 2477.29,428.03 L2477.65,442.32 A72.2,72.2 0 0 0 2438.57,455.02 Z" fill="#e2e9f5"/>
<path d="M2460.6,542.5 H2472.6 L2466.6,535.7 Z" fill="#333"/>
<path d="M2749.11,428.03 A86.5,86.5 0 0 1 2795.94,443.24 L2787.83,455.02 A72.2,72.2 0 0 0 2748.75,442.32 Z" fill="#95a2b1"/>
<path d="M2799.52,445.84 A86.5,86.5 0 0 1 2828.46,485.67 L2814.97,490.44 A72.2,72.2 0 0 0 2790.82,457.19 Z" fill="#95a2b1"/>
<path d="M2829.82,489.88 A86.5,86.5 0 0 1 2829.82,539.12 L2816.11,535.05 A72.2,72.2 0 0 0 2816.11,493.95 Z" fill="#e2e9f5"/>
<path d="M2828.46,543.33 A86.5,86.5 0 0 1 2799.52,583.16 L2790.82,571.81 A72.2,72.2 0 0 0 2814.97,538.56 Z" fill="#e2e9f5"/>
<path d="M2795.94,585.76 A86.5,86.5 0 0 1 2749.11,600.97 L2748.75,586.68 A72.2,72.2 0 0 0 2787.83,573.98 Z" fill="#e2e9f5"/>
<path d="M2744.69,600.97 A86.5,86.5 0 0 1 2697.86,585.76 L2705.97,573.98 A72.2,72.2 0 0 0 2745.05,586.68 Z" fill="#e2e9f5"/>
<path d="M2694.28,583.16 A86.5,86.5 0 0 1 2665.34,543.33 L2678.83,538.56 A72.2,72.2 0 0 0 2702.98,571.81 Z" fill="#e2e9f5"/>
<path d="M2663.98,539.12 A86.5,86.5 0 0 1 2663.98,489.88 L2677.69,493.95 A72.2,72.2 0 0 0 2677.69,535.05 Z" fill="#e2e9f5"/>
<path d="M2665.34,485.67 A86.5,86.5 0 0 1 2694.28,445.84 L2702.98,457.19 A72.2,72.2 0 0 0 2678.83,490.44 Z" fill="#e2e9f5"/>
<path d="M2697.86,443.24 A86.5,86.5 0 0 1 2744.69,428.03 L2745.05,442.32 A72.2,72.2 0 0 0 2705.97,455.02 Z" fill="#e2e9f5"/>
<path d="M2716.4,536.2 H2728.4 L2722.4,543 Z" fill="#333"/>
<rect x="560" y="938.0" width="2296" height="2" fill="#e4e6f0"/>
<rect x="560" y="1033.5" width="2296" height="2" fill="#dedede"/>
<rect x="560" y="1128.0" width="2296" height="2" fill="#e4e6f0"/>
<rect x="560" y="1221.0" width="2296" height="2" fill="#e4e6f0"/>
<rect x="560" y="1315.0" width="2296" height="2" fill="#e4e6f0"/>
<defs><linearGradient id="fillg" x1="0" y1="0" x2="0" y2="1"><stop offset="0" stop-color="#f0f0f5" stop-opacity="0.2"/><stop offset="1" stop-color="#eeeef3" stop-opacity="0.55"/></linearGradient></defs>
<path d="M581.6,1384.0 C585.7,1367.7 589.9,1335.0 594.0,1335.0 C601.7,1335.0 609.3,1386.0 617.0,1386.0 C624.7,1386.0 632.3,1384.3 640.0,1380.0 C644.2,1377.7 648.3,1260.0 652.5,1260.0 C656.3,1260.0 660.2,1388.0 664.0,1388.0 C667.3,1388.0 670.7,1376.7 674.0,1376.5 C679.3,1376.1 684.7,1376.4 690.0,1376.0 C693.0,1375.8 696.0,1327.0 699.0,1327.0 C702.9,1327.0 706.8,1408.0 710.7,1408.0 C717.7,1408.0 724.7,1392.2 731.7,1376.0 C736.5,1365.0 741.2,1315.0 746.0,1315.0 C750.0,1315.0 754.0,1379.0 758.0,1379.0 C762.0,1379.0 766.0,1378.3 770.0,1377.0 C773.7,1375.8 777.3,1321.0 781.0,1321.0 C785.5,1321.0 790.1,1380.5 794.6,1382.0 C798.4,1383.2 802.2,1384.0 806.0,1384.0 C809.8,1384.0 813.7,1379.6 817.5,1379.0 C821.3,1378.4 825.2,1378.7 829.0,1378.0 C832.7,1377.4 836.3,1228.6 840.0,1228.6 C843.9,1228.6 847.9,1379.0 851.8,1379.0 C854.2,1379.0 856.6,1378.5 859.0,1378.0 C868.5,1376.0 877.9,1344.0 887.4,1344.0 C890.9,1344.0 894.5,1385.0 898.0,1385.0 C905.7,1385.0 913.3,1381.1 921.0,1371.0 C925.2,1365.5 929.3,948.5 933.5,948.5 C937.5,948.5 941.6,1386.0 945.6,1386.0 C951.1,1386.0 956.5,1377.5 962.0,1370.0 C968.3,1361.3 974.7,1325.0 981.0,1325.0 C986.3,1325.0 991.7,1367.0 997.0,1371.0 C1004.3,1376.5 1011.7,1380.0 1019.0,1380.0 C1021.7,1380.0 1024.3,1318.0 1027.0,1318.0 C1031.5,1318.0 1036.0,1381.6 1040.5,1382.0 C1048.7,1382.7 1056.8,1383.0 1065.0,1383.0 C1067.7,1383.0 1070.3,1324.0 1073.0,1324.0 C1077.5,1324.0 1082.1,1375.1 1086.6,1377.0 C1091.1,1378.9 1095.5,1380.0 1100.0,1380.0 C1102.7,1380.0 1105.3,1318.5 1108.0,1318.5 C1114.3,1318.5 1120.7,1387.6 1127.0,1387.6 C1137.0,1387.6 1147.0,1385.2 1157.0,1378.0 C1160.9,1375.2 1164.7,1249.0 1168.6,1249.0 C1172.7,1249.0 1176.9,1389.0 1181.0,1389.0 C1187.3,1389.0 1193.7,1385.6 1200.0,1380.0 C1205.6,1375.1 1211.1,1294.0 1216.7,1294.0 C1219.5,1294.0 1222.2,1294.8 1225.0,1296.0 C1229.3,1297.9 1233.7,1379.0 1238.0,1379.0 C1242.5,1379.0 1247.0,1379.0 1251.5,1379.0 C1258.3,1379.0 1265.0,1295.4 1271.8,1295.4 C1276.8,1295.4 1281.7,1376.6 1286.7,1376.6 C1290.3,1376.6 1293.9,1376.4 1297.5,1376.0 C1301.3,1375.6 1305.2,1215.4 1309.0,1215.4 C1312.8,1215.4 1316.7,1379.0 1320.5,1379.0 C1326.3,1379.0 1332.2,1378.7 1338.0,1378.0 C1344.0,1377.3 1350.0,1204.7 1356.0,1204.7 C1360.0,1204.7 1364.0,1382.0 1368.0,1382.0 C1371.7,1382.0 1375.3,1381.3 1379.0,1380.0 C1383.2,1378.5 1387.4,1262.0 1391.6,1262.0 C1400.0,1262.0 1408.4,1380.6 1416.8,1380.6 C1420.4,1380.6 1423.9,1379.0 1427.5,1376.0 C1430.9,1373.1 1434.4,1209.5 1437.8,1209.5 C1442.0,1209.5 1446.3,1378.3 1450.5,1380.6 C1454.6,1382.8 1458.6,1384.0 1462.7,1384.0 C1465.8,1384.0 1468.9,1371.0 1472.0,1371.0 C1476.0,1371.0 1480.0,1378.0 1484.0,1378.0 C1488.2,1378.0 1492.4,1271.0 1496.6,1271.0 C1503.3,1271.0 1510.1,1372.6 1516.8,1372.6 C1521.8,1372.6 1526.7,1296.8 1531.7,1296.8 C1537.6,1296.8 1543.5,1379.0 1549.4,1379.0 C1554.8,1379.0 1560.2,1374.0 1565.6,1374.0 C1570.1,1374.0 1574.5,1380.0 1579.0,1380.0 C1586.7,1380.0 1594.3,1249.0 1602.0,1249.0 C1606.0,1249.0 1610.0,1372.5 1614.0,1372.5 C1617.8,1372.5 1621.7,1153.7 1625.5,1153.7 C1629.3,1153.7 1633.2,1376.7 1637.0,1378.0 C1641.0,1379.3 1645.0,1380.0 1649.0,1380.0 C1653.7,1380.0 1658.3,1374.0 1663.0,1374.0 C1666.7,1374.0 1670.3,1380.0 1674.0,1380.0 C1677.0,1380.0 1680.0,1315.6 1683.0,1315.6 C1687.7,1315.6 1692.3,1381.0 1697.0,1381.0 C1700.5,1381.0 1704.1,1380.6 1707.6,1380.0 C1711.7,1379.3 1715.9,1314.0 1720.0,1314.0 C1725.3,1314.0 1730.7,1381.0 1736.0,1381.0 C1742.3,1381.0 1748.7,1380.2 1755.0,1378.0 C1758.7,1376.7 1762.3,1228.4 1766.0,1228.4 C1771.3,1228.4 1776.7,1383.0 1782.0,1383.0 C1792.0,1383.0 1802.0,1381.2 1812.0,1377.0 C1817.0,1374.9 1822.0,1328.0 1827.0,1328.0 C1831.0,1328.0 1835.0,1377.3 1839.0,1378.0 C1842.7,1378.6 1846.3,1379.0 1850.0,1379.0 C1853.0,1379.0 1856.0,1328.0 1859.0,1328.0 C1864.0,1328.0 1869.0,1381.0 1874.0,1381.0 C1884.9,1381.0 1895.8,1380.8 1906.7,1380.0 C1910.8,1379.7 1914.9,1315.6 1919.0,1315.6 C1923.0,1315.6 1927.0,1387.6 1931.0,1387.6 C1934.0,1387.6 1937.0,1384.4 1940.0,1381.0 C1944.5,1375.9 1949.0,1341.7 1953.5,1341.7 C1957.3,1341.7 1961.2,1341.8 1965.0,1342.0 C1969.0,1342.2 1973.0,1380.0 1977.0,1380.0 C1981.3,1380.0 1985.7,1378.7 1990.0,1376.0 C1993.7,1373.7 1997.3,1218.4 2001.0,1218.4 C2004.7,1218.4 2008.3,1380.8 2012.0,1382.0 C2016.0,1383.3 2020.0,1384.0 2024.0,1384.0 C2031.7,1384.0 2039.3,1382.9 2047.0,1380.0 C2051.2,1378.4 2055.5,1043.5 2059.7,1043.5 C2069.5,1043.5 2079.2,1404.8 2089.0,1407.0 C2096.0,1408.6 2103.0,1409.5 2110.0,1409.5 C2351.3,1409.7 2592.7,1409.6 2834.0,1409.7 L2834,1410 L581.6,1410 Z" fill="url(#fillg)"/>
<rect x="602.6" y="1344" width="5.5" height="66.0" fill="#4a6fa5"/>
<rect x="657.0" y="1324" width="5.5" height="86.0" fill="#7b7fd0"/>
<rect x="701.2" y="1368" width="5.5" height="42.0" fill="#7cc4b8"/>
<rect x="753.2" y="1348" width="5.5" height="62.0" fill="#8ecfc8"/>
<rect x="783.6" y="1338" width="5.5" height="72.0" fill="#6a88c2"/>
<rect x="846.2" y="1305" width="5.5" height="105.0" fill="#7a9cc6"/>
<rect x="885.2" y="1354" width="5.5" height="56.0" fill="#b3a3e8"/>
<rect x="933.5" y="1160" width="7" height="250.0" fill="#c8b98a"/>
<rect x="989.0" y="1347" width="5.5" height="63.0" fill="#6672b8"/>
<rect x="1026.8" y="1340" width="5.5" height="70.0" fill="#4a72a8"/>
<rect x="1082.2" y="1347" width="5.5" height="63.0" fill="#e08fc0"/>
<rect x="1117.8" y="1342" width="5.5" height="68.0" fill="#4aa6a6"/>
<rect x="1173.2" y="1318" width="5.5" height="92.0" fill="#4a90d8"/>
<rect x="1224.8" y="1297" width="5.5" height="113.0" fill="#6a88c2"/>
<rect x="1271.8" y="1304" width="5.5" height="106.0" fill="#7a9cc6"/>
<rect x="1314.2" y="1298" width="5.5" height="112.0" fill="#7b7fe0"/>
<rect x="1354.2" y="1271" width="5.5" height="139.0" fill="#c8b98a"/>
<rect x="1399.0" y="1306" width="5.5" height="104.0" fill="#6672b8"/>
<rect x="1444.2" y="1295" width="5.5" height="115.0" fill="#4a90d8"/>
<rect x="1504.7" y="1314" width="5.5" height="96.0" fill="#c49a88"/>
<rect x="1539.8" y="1332" width="5.5" height="78.0" fill="#c8b98a"/>
<rect x="1600.5" y="1309" width="5.5" height="101.0" fill="#8a86e0"/>
<rect x="1629.2" y="1266" width="5.5" height="144.0" fill="#7a9cc6"/>
<rect x="1690.2" y="1336" width="5.5" height="74.0" fill="#6672b8"/>
<rect x="1724.2" y="1344" width="5.5" height="66.0" fill="#4a80c8"/>
<rect x="1772.2" y="1314" width="5.5" height="96.0" fill="#7b84d8"/>
<rect x="1826.8" y="1351" width="5.5" height="59.0" fill="#4aa6a6"/>
<rect x="1867.8" y="1353.5" width="5.5" height="56.5" fill="#7cc4c0"/>
<rect x="1919.2" y="1351" width="5.5" height="59.0" fill="#7a9cc6"/>
<rect x="1962.2" y="1342" width="5.5" height="68.0" fill="#c8b98a"/>
<rect x="2007.8" y="1321" width="5.5" height="89.0" fill="#8a86e0"/>
<rect x="2066.5" y="1141" width="7" height="269.0" fill="#c8b98a"/>
<path d="M581.6,1384.0 C585.7,1367.7 589.9,1335.0 594.0,1335.0 C601.7,1335.0 609.3,1386.0 617.0,1386.0 C624.7,1386.0 632.3,1384.3 640.0,1380.0 C644.2,1377.7 648.3,1260.0 652.5,1260.0 C656.3,1260.0 660.2,1388.0 664.0,1388.0 C667.3,1388.0 670.7,1376.7 674.0,1376.5 C679.3,1376.1 684.7,1376.4 690.0,1376.0 C693.0,1375.8 696.0,1327.0 699.0,1327.0 C702.9,1327.0 706.8,1408.0 710.7,1408.0 C717.7,1408.0 724.7,1392.2 731.7,1376.0 C736.5,1365.0 741.2,1315.0 746.0,1315.0 C750.0,1315.0 754.0,1379.0 758.0,1379.0 C762.0,1379.0 766.0,1378.3 770.0,1377.0 C773.7,1375.8 777.3,1321.0 781.0,1321.0 C785.5,1321.0 790.1,1380.5 794.6,1382.0 C798.4,1383.2 802.2,1384.0 806.0,1384.0 C809.8,1384.0 813.7,1379.6 817.5,1379.0 C821.3,1378.4 825.2,1378.7 829.0,1378.0 C832.7,1377.4 836.3,1228.6 840.0,1228.6 C843.9,1228.6 847.9,1379.0 851.8,1379.0 C854.2,1379.0 856.6,1378.5 859.0,1378.0 C868.5,1376.0 877.9,1344.0 887.4,1344.0 C890.9,1344.0 894.5,1385.0 898.0,1385.0 C905.7,1385.0 913.3,1381.1 921.0,1371.0 C925.2,1365.5 929.3,948.5 933.5,948.5 C937.5,948.5 941.6,1386.0 945.6,1386.0 C951.1,1386.0 956.5,1377.5 962.0,1370.0 C968.3,1361.3 974.7,1325.0 981.0,1325.0 C986.3,1325.0 991.7,1367.0 997.0,1371.0 C1004.3,1376.5 1011.7,1380.0 1019.0,1380.0 C1021.7,1380.0 1024.3,1318.0 1027.0,1318.0 C1031.5,1318.0 1036.0,1381.6 1040.5,1382.0 C1048.7,1382.7 1056.8,1383.0 1065.0,1383.0 C1067.7,1383.0 1070.3,1324.0 1073.0,1324.0 C1077.5,1324.0 1082.1,1375.1 1086.6,1377.0 C1091.1,1378.9 1095.5,1380.0 1100.0,1380.0 C1102.7,1380.0 1105.3,1318.5 1108.0,1318.5 C1114.3,1318.5 1120.7,1387.6 1127.0,1387.6 C1137.0,1387.6 1147.0,1385.2 1157.0,1378.0 C1160.9,1375.2 1164.7,1249.0 1168.6,1249.0 C1172.7,1249.0 1176.9,1389.0 1181.0,1389.0 C1187.3,1389.0 1193.7,1385.6 1200.0,1380.0 C1205.6,1375.1 1211.1,1294.0 1216.7,1294.0 C1219.5,1294.0 1222.2,1294.8 1225.0,1296.0 C1229.3,1297.9 1233.7,1379.0 1238.0,1379.0 C1242.5,1379.0 1247.0,1379.0 1251.5,1379.0 C1258.3,1379.0 1265.0,1295.4 1271.8,1295.4 C1276.8,1295.4 1281.7,1376.6 1286.7,1376.6 C1290.3,1376.6 1293.9,1376.4 1297.5,1376.0 C1301.3,1375.6 1305.2,1215.4 1309.0,1215.4 C1312.8,1215.4 1316.7,1379.0 1320.5,1379.0 C1326.3,1379.0 1332.2,1378.7 1338.0,1378.0 C1344.0,1377.3 1350.0,1204.7 1356.0,1204.7 C1360.0,1204.7 1364.0,1382.0 1368.0,1382.0 C1371.7,1382.0 1375.3,1381.3 1379.0,1380.0 C1383.2,1378.5 1387.4,1262.0 1391.6,1262.0 C1400.0,1262.0 1408.4,1380.6 1416.8,1380.6 C1420.4,1380.6 1423.9,1379.0 1427.5,1376.0 C1430.9,1373.1 1434.4,1209.5 1437.8,1209.5 C1442.0,1209.5 1446.3,1378.3 1450.5,1380.6 C1454.6,1382.8 1458.6,1384.0 1462.7,1384.0 C1465.8,1384.0 1468.9,1371.0 1472.0,1371.0 C1476.0,1371.0 1480.0,1378.0 1484.0,1378.0 C1488.2,1378.0 1492.4,1271.0 1496.6,1271.0 C1503.3,1271.0 1510.1,1372.6 1516.8,1372.6 C1521.8,1372.6 1526.7,1296.8 1531.7,1296.8 C1537.6,1296.8 1543.5,1379.0 1549.4,1379.0 C1554.8,1379.0 1560.2,1374.0 1565.6,1374.0 C1570.1,1374.0 1574.5,1380.0 1579.0,1380.0 C1586.7,1380.0 1594.3,1249.0 1602.0,1249.0 C1606.0,1249.0 1610.0,1372.5 1614.0,1372.5 C1617.8,1372.5 1621.7,1153.7 1625.5,1153.7 C1629.3,1153.7 1633.2,1376.7 1637.0,1378.0 C1641.0,1379.3 1645.0,1380.0 1649.0,1380.0 C1653.7,1380.0 1658.3,1374.0 1663.0,1374.0 C1666.7,1374.0 1670.3,1380.0 1674.0,1380.0 C1677.0,1380.0 1680.0,1315.6 1683.0,1315.6 C1687.7,1315.6 1692.3,1381.0 1697.0,1381.0 C1700.5,1381.0 1704.1,1380.6 1707.6,1380.0 C1711.7,1379.3 1715.9,1314.0 1720.0,1314.0 C1725.3,1314.0 1730.7,1381.0 1736.0,1381.0 C1742.3,1381.0 1748.7,1380.2 1755.0,1378.0 C1758.7,1376.7 1762.3,1228.4 1766.0,1228.4 C1771.3,1228.4 1776.7,1383.0 1782.0,1383.0 C1792.0,1383.0 1802.0,1381.2 1812.0,1377.0 C1817.0,1374.9 1822.0,1328.0 1827.0,1328.0 C1831.0,1328.0 1835.0,1377.3 1839.0,1378.0 C1842.7,1378.6 1846.3,1379.0 1850.0,1379.0 C1853.0,1379.0 1856.0,1328.0 1859.0,1328.0 C1864.0,1328.0 1869.0,1381.0 1874.0,1381.0 C1884.9,1381.0 1895.8,1380.8 1906.7,1380.0 C1910.8,1379.7 1914.9,1315.6 1919.0,1315.6 C1923.0,1315.6 1927.0,1387.6 1931.0,1387.6 C1934.0,1387.6 1937.0,1384.4 1940.0,1381.0 C1944.5,1375.9 1949.0,1341.7 1953.5,1341.7 C1957.3,1341.7 1961.2,1341.8 1965.0,1342.0 C1969.0,1342.2 1973.0,1380.0 1977.0,1380.0 C1981.3,1380.0 1985.7,1378.7 1990.0,1376.0 C1993.7,1373.7 1997.3,1218.4 2001.0,1218.4 C2004.7,1218.4 2008.3,1380.8 2012.0,1382.0 C2016.0,1383.3 2020.0,1384.0 2024.0,1384.0 C2031.7,1384.0 2039.3,1382.9 2047.0,1380.0 C2051.2,1378.4 2055.5,1043.5 2059.7,1043.5 C2069.5,1043.5 2079.2,1404.8 2089.0,1407.0 C2096.0,1408.6 2103.0,1409.5 2110.0,1409.5 C2351.3,1409.7 2592.7,1409.6 2834.0,1409.7" fill="none" stroke="#c6c6c6" stroke-width="3" stroke-linejoin="round"/>
<rect x="560" y="1409" width="2296" height="2.2" fill="#d3d8e8"/>
<rect x="580.8" y="1411" width="1.5" height="7" fill="#d3d8e8"/>
<rect x="721.5" y="1411" width="1.5" height="7" fill="#d3d8e8"/>
<rect x="862.1" y="1411" width="1.5" height="7" fill="#d3d8e8"/>
<rect x="1002.8" y="1411" width="1.5" height="7" fill="#d3d8e8"/>
<rect x="1143.5" y="1411" width="1.5" height="7" fill="#d3d8e8"/>
<rect x="1284.2" y="1411" width="1.5" height="7" fill="#d3d8e8"/>
<rect x="1424.9" y="1411" width="1.5" height="7" fill="#d3d8e8"/>
<rect x="1565.6" y="1411" width="1.5" height="7" fill="#d3d8e8"/>
<rect x="1706.3" y="1411" width="1.5" height="7" fill="#d3d8e8"/>
<rect x="1847.0" y="1411" width="1.5" height="7" fill="#d3d8e8"/>
<rect x="1987.8" y="1411" width="1.5" height="7" fill="#d3d8e8"/>
<rect x="2128.4" y="1411" width="1.5" height="7" fill="#d3d8e8"/>
<rect x="2269.1" y="1411" width="1.5" height="7" fill="#d3d8e8"/>
<rect x="2409.8" y="1411" width="1.5" height="7" fill="#d3d8e8"/>
<rect x="2550.5" y="1411" width="1.5" height="7" fill="#d3d8e8"/>
<rect x="2691.2" y="1411" width="1.5" height="7" fill="#d3d8e8"/>
<rect x="2831.9" y="1411" width="1.5" height="7" fill="#d3d8e8"/>
<rect x="593" y="1284" width="101.0" height="38.0" fill="#3f7fdd"/>
<rect x="760" y="1286.7" width="66.5" height="38.6" fill="#52acb0"/>
<rect x="843" y="1244" width="89.6" height="38.0" fill="#ecb95a"/>
<rect x="921.8" y="1098.4" width="103.7" height="37.9" fill="#3f7fdd"/>
<path d="M925,1135.8 L934,1145.8 L943,1135.8 Z" fill="#3f7fdd"/>
<rect x="873" y="1292" width="107.0" height="38.0" fill="#8770dc"/>
<path d="M877,1329.5 L886,1339.5 L895,1329.5 Z" fill="#8770dc"/>
<rect x="980" y="1286" width="98.0" height="37.0" fill="#3f7fdd"/>
<rect x="1107" y="1281" width="100.5" height="38.0" fill="#3f7fdd"/>
<path d="M1109,1318.5 L1118,1328.5 L1127,1318.5 Z" fill="#3f7fdd"/>
<rect x="1212.7" y="1236" width="103.8" height="38.0" fill="#e29a56"/>
<path d="M1216.7,1273.5 L1225.7,1283.5 L1234.7,1273.5 Z" fill="#e29a56"/>
<rect x="1350" y="1210.5" width="91.0" height="38.0" fill="#3f7fdd"/>
<rect x="1441.6" y="1233" width="86.1" height="38.0" fill="#3a6291"/>
<rect x="1533" y="1271.5" width="95.0" height="37.9" fill="#3f7fdd"/>
<rect x="1622" y="1206" width="94.5" height="38.0" fill="#ecb95a"/>
<rect x="1676.5" y="1276" width="110.5" height="38.0" fill="#9a2f30"/>
<path d="M1681,1313.5 L1690,1323.5 L1699,1313.5 Z" fill="#9a2f30"/>
<rect x="1822" y="1290.4" width="91.4" height="37.6" fill="#3f7fdd"/>
<rect x="1952" y="1282.4" width="102.0" height="38.2" fill="#3f7fdd"/>
<path d="M1953.5,1320.1 L1962.5,1330.1 L1971.5,1320.1 Z" fill="#3f7fdd"/>
<rect x="1998" y="1240.5" width="99.0" height="38.2" fill="#3f7fdd"/>
<rect x="2055.7" y="1080.7" width="102.3" height="38.3" fill="#3f7fdd"/>
<path d="M2057,1118.5 L2066,1128.5 L2075,1118.5 Z" fill="#3f7fdd"/>
</svg>
<div class="t" style="left:97.8px;top:25.2px;font-size:55.23px;font-weight:700;color:#ffffff;transform:scaleX(0.9251)">DataDome</div>
<div class="t" style="left:62.2px;top:132.6px;font-size:22.97px;font-weight:400;-webkit-text-stroke:0.78px;color:#ffffff;transform:scaleX(0.9487)">Threats</div>
<div class="t" style="left:61.2px;top:708.6px;font-size:22.97px;font-weight:400;-webkit-text-stroke:0.78px;color:#ffffff;transform:scaleX(0.9733)">Endpoints</div>
<div class="t" style="left:61.3px;top:772.6px;font-size:22.97px;font-weight:400;-webkit-text-stroke:0.78px;color:#ffffff;transform:scaleX(0.9123)">Responses</div>
<div class="t" style="left:62.2px;top:836.6px;font-size:22.97px;font-weight:400;-webkit-text-stroke:0.78px;color:#ffffff;transform:scaleX(0.9673)">Access Control</div>
<div class="t" style="left:61.3px;top:900.6px;font-size:22.97px;font-weight:400;-webkit-text-stroke:0.78px;color:#ffffff;transform:scaleX(0.9484)">Real-Time Threats</div>
<div class="t" style="left:61.2px;top:964.6px;font-size:22.97px;font-weight:400;-webkit-text-stroke:0.78px;color:#ffffff;transform:scaleX(0.9842)">Explore</div>
<div class="t" style="left:62.2px;top:1028.6px;font-size:22.97px;font-weight:400;-webkit-text-stroke:0.78px;color:#ffffff;transform:scaleX(0.9767)">Account Protect</div>
<div class="t" style="left:61.4px;top:192.3px;font-size:22.09px;font-weight:400;-webkit-text-stroke:0.75px;color:#ffffff;transform:scaleX(1.0196)">Overview</div>
<div class="t" style="left:61.4px;top:243.5px;font-size:22.09px;font-weight:400;-webkit-text-stroke:0.75px;color:#ffffff;transform:scaleX(1.0329)">Scraping</div>
<div class="t" style="left:61.4px;top:294.6px;font-size:22.09px;font-weight:400;-webkit-text-stroke:0.75px;color:#ffffff;transform:scaleX(1.0444)">Credential Stuffing</div>
<div class="t" style="left:61.4px;top:345.8px;font-size:22.09px;font-weight:400;-webkit-text-stroke:0.75px;color:#ffffff;transform:scaleX(1.0288)">Spamming</div>
<div class="t" style="left:61.4px;top:396.9px;font-size:22.09px;font-weight:400;-webkit-text-stroke:0.75px;color:#ffffff;transform:scaleX(0.9635)">Layer 7 DDoS</div>
<div class="t" style="left:62.4px;top:448.1px;font-size:22.09px;font-weight:400;-webkit-text-stroke:0.75px;color:#ffffff;transform:scaleX(1.0323)">Vulnerability Scanning</div>
<div class="t" style="left:61.4px;top:499.2px;font-size:22.09px;font-weight:400;-webkit-text-stroke:0.75px;color:#ffffff;transform:scaleX(1.0225)">Fake Account Creation</div>
<div class="t" style="left:61.4px;top:550.4px;font-size:22.09px;font-weight:400;-webkit-text-stroke:0.75px;color:#ffffff;transform:scaleX(1.0422)">Scalping</div>
<div class="t" style="left:61.4px;top:601.5px;font-size:22.09px;font-weight:400;-webkit-text-stroke:0.75px;color:#ffffff;transform:scaleX(1.0067)">Payment Fraud</div>
<div class="t" style="left:62.4px;top:652.7px;font-size:22.09px;font-weight:400;-webkit-text-stroke:0.75px;color:#ffffff;transform:scaleX(0.9806)">API Abuse</div>
<div class="t" style="left:89.5px;top:1122.3px;font-size:23.26px;font-weight:400;-webkit-text-stroke:0.79px;color:#ffffff;transform:scaleX(0.9476)">What's New</div>
<div class="t" style="left:88.5px;top:1183.3px;font-size:23.26px;font-weight:400;-webkit-text-stroke:0.79px;color:#ffffff;transform:scaleX(0.9867)">Management</div>
<div class="t" style="left:88.5px;top:1241.3px;font-size:23.26px;font-weight:400;-webkit-text-stroke:0.79px;color:#ffffff;transform:scaleX(0.9871)">Documentation</div>
<div class="t" style="left:88.6px;top:1298.3px;font-size:23.26px;font-weight:400;-webkit-text-stroke:0.79px;color:#ffffff;transform:scaleX(0.9476)">Demo Ecommerce</div>
<div class="t" style="left:88.6px;top:1356.3px;font-size:23.26px;font-weight:400;-webkit-text-stroke:0.79px;color:#ffffff;transform:scaleX(0.8877)">PREMIUM STAFF</div>
<div class="t" style="left:229.2px;top:1125.0px;font-size:18.9px;font-weight:700;color:#ffffff;transform:scaleX(1.0000)">1</div>
<div class="t" style="left:1843.0px;top:-0.4px;font-size:17.01px;font-weight:400;color:#1c3b52;transform:scaleX(1.0152)">Domains</div>
<div class="t" style="left:1887.0px;top:30.9px;font-size:22.53px;font-weight:400;color:#1c3b52;transform:scaleX(0.9580)">All Domains</div>
<div class="t" style="left:2220.6px;top:-0.4px;font-size:17.01px;font-weight:400;color:#1c3b52;transform:scaleX(1.0270)">Endpoints</div>
<div class="t" style="left:2264.6px;top:30.9px;font-size:22.53px;font-weight:400;color:#1c3b52;transform:scaleX(0.9711)">All endpoints</div>
<div class="t" style="left:2496.3px;top:-0.4px;font-size:17.01px;font-weight:400;color:#1c3b52;transform:scaleX(1.0000)">Time Range</div>
<div class="t" style="left:2535.6px;top:30.9px;font-size:22.53px;font-weight:400;color:#1c3b52;transform:scaleX(0.9766)">Nov 25 to Nov 26</div>
<div class="t" style="left:451.0px;top:140.5px;font-size:34.88px;font-weight:400;-webkit-text-stroke:1.40px;color:#1f4a66;transform:scaleX(0.9274)">THREATS OVERVIEW</div>
<div class="t" style="left:499.0px;top:248.4px;font-size:29.07px;font-weight:400;-webkit-text-stroke:1.02px;color:#0f2332;transform:scaleX(0.9917)">Overview</div>
<div class="t" style="left:500.0px;top:780.9px;font-size:29.65px;font-weight:400;-webkit-text-stroke:1.04px;color:#0f2332;transform:scaleX(0.9850)">Attack Timeline</div>
<div class="t" style="left:560.0px;top:365.1px;font-size:23.55px;font-weight:400;-webkit-text-stroke:0.75px;color:#ffffff;transform:scaleX(1.0068)">Layer 7 DDoS</div>
<div class="t" style="left:557.6px;top:495.5px;font-size:21.8px;font-weight:400;-webkit-text-stroke:0.61px;color:#1e3f57;transform:scaleX(1.0769)">Moderate</div>
<div class="t" style="left:601.0px;top:530.0px;font-size:18.9px;font-weight:400;color:#333333;transform:scaleX(1.0654)">0%</div>
<div class="t" style="left:543.4px;top:622.3px;font-size:32.7px;font-weight:400;-webkit-text-stroke:0.72px;color:#3a3a3a;transform:scaleX(0.8929)">1,011,740</div>
<div class="t" style="left:852.4px;top:365.1px;font-size:23.55px;font-weight:400;-webkit-text-stroke:0.75px;color:#ffffff;transform:scaleX(1.0714)">Scraping</div>
<div class="t" style="left:831.1px;top:495.5px;font-size:21.8px;font-weight:400;-webkit-text-stroke:0.61px;color:#1e3f57;transform:scaleX(1.0361)">Elevated</div>
<div class="t" style="left:864.0px;top:530.0px;font-size:18.9px;font-weight:400;color:#333333;transform:scaleX(1.0167)">22%</div>
<div class="t" style="left:804.7px;top:622.3px;font-size:32.7px;font-weight:400;-webkit-text-stroke:0.72px;color:#3a3a3a;transform:scaleX(0.9580)">1,003,613</div>
<div class="t" style="left:1093.5px;top:354.9px;font-size:23.55px;font-weight:400;-webkit-text-stroke:0.75px;color:#ffffff;transform:scaleX(1.0990)">Credential</div>
<div class="t" style="left:1093.5px;top:378.7px;font-size:23.55px;font-weight:400;-webkit-text-stroke:0.75px;color:#ffffff;transform:scaleX(1.1351)">Stuffing</div>
<div class="t" style="left:1098.5px;top:495.5px;font-size:21.8px;font-weight:400;-webkit-text-stroke:0.61px;color:#1e3f57;transform:scaleX(1.0361)">Elevated</div>
<div class="t" style="left:1130.3px;top:530.0px;font-size:18.9px;font-weight:400;color:#333333;transform:scaleX(0.9070)">-12%</div>
<div class="t" style="left:1081.5px;top:622.3px;font-size:32.7px;font-weight:400;-webkit-text-stroke:0.72px;color:#3a3a3a;transform:scaleX(1.0345)">504,975</div>
<div class="t" style="left:1381.5px;top:367.1px;font-size:23.55px;font-weight:400;-webkit-text-stroke:0.75px;color:#ffffff;transform:scaleX(1.0193)">API Abuse</div>
<div class="t" style="left:1359.8px;top:495.5px;font-size:21.8px;font-weight:400;-webkit-text-stroke:0.61px;color:#1e3f57;transform:scaleX(1.0769)">Moderate</div>
<div class="t" style="left:1404.4px;top:530.0px;font-size:18.9px;font-weight:400;color:#333333;transform:scaleX(0.9808)">6%</div>
<div class="t" style="left:1348.8px;top:622.3px;font-size:32.7px;font-weight:400;-webkit-text-stroke:0.72px;color:#3a3a3a;transform:scaleX(1.0261)">170,608</div>
<div class="t" style="left:1655.5px;top:367.1px;font-size:23.55px;font-weight:400;-webkit-text-stroke:0.75px;color:#ffffff;transform:scaleX(1.0795)">Scalping</div>
<div class="t" style="left:1627.2px;top:495.5px;font-size:21.8px;font-weight:400;-webkit-text-stroke:0.61px;color:#1e3f57;transform:scaleX(1.0769)">Moderate</div>
<div class="t" style="left:1665.8px;top:530.0px;font-size:18.9px;font-weight:400;color:#333333;transform:scaleX(0.8791)">-17%</div>
<div class="t" style="left:1617.6px;top:622.3px;font-size:32.7px;font-weight:400;-webkit-text-stroke:0.72px;color:#3a3a3a;transform:scaleX(1.0035)">135,348</div>
<div class="t" style="left:1897.0px;top:354.9px;font-size:23.55px;font-weight:400;-webkit-text-stroke:0.75px;color:#ffffff;transform:scaleX(1.0883)">Vulnerability</div>
<div class="t" style="left:1895.9px;top:378.7px;font-size:23.55px;font-weight:400;-webkit-text-stroke:0.75px;color:#ffffff;transform:scaleX(1.0833)">Scanning</div>
<div class="t" style="left:1908.1px;top:495.5px;font-size:21.8px;font-weight:400;-webkit-text-stroke:0.61px;color:#1e3f57;transform:scaleX(1.0923)">Critical</div>
<div class="t" style="left:1929.5px;top:530.0px;font-size:18.9px;font-weight:400;color:#333333;transform:scaleX(1.0419)">-20%</div>
<div class="t" style="left:1889.5px;top:622.3px;font-size:32.7px;font-weight:400;-webkit-text-stroke:0.72px;color:#3a3a3a;transform:scaleX(0.9270)">122,815</div>
<div class="t" style="left:2179.3px;top:367.1px;font-size:23.55px;font-weight:400;-webkit-text-stroke:0.75px;color:#ffffff;transform:scaleX(1.0568)">Spamming</div>
<div class="t" style="left:2162.0px;top:495.5px;font-size:21.8px;font-weight:400;-webkit-text-stroke:0.61px;color:#1e3f57;transform:scaleX(1.0769)">Moderate</div>
<div class="t" style="left:2201.2px;top:530.0px;font-size:18.9px;font-weight:400;color:#333333;transform:scaleX(1.0083)">36%</div>
<div class="t" style="left:2159.5px;top:622.3px;font-size:32.7px;font-weight:400;-webkit-text-stroke:0.72px;color:#3a3a3a;transform:scaleX(1.0510)">96,635</div>
<div class="t" style="left:2430.0px;top:354.9px;font-size:23.55px;font-weight:400;-webkit-text-stroke:0.75px;color:#ffffff;transform:scaleX(1.0430)">Payment</div>
<div class="t" style="left:2430.0px;top:378.7px;font-size:23.55px;font-weight:400;-webkit-text-stroke:0.75px;color:#ffffff;transform:scaleX(1.0417)">Fraud</div>
<div class="t" style="left:2429.4px;top:495.5px;font-size:21.8px;font-weight:400;-webkit-text-stroke:0.61px;color:#1e3f57;transform:scaleX(1.0769)">Moderate</div>
<div class="t" style="left:2476.3px;top:530.0px;font-size:18.9px;font-weight:400;color:#333333;transform:scaleX(0.8192)">1%</div>
<div class="t" style="left:2426.1px;top:622.3px;font-size:32.7px;font-weight:400;-webkit-text-stroke:0.72px;color:#3a3a3a;transform:scaleX(1.0684)">84,689</div>
<div class="t" style="left:2697.6px;top:354.9px;font-size:23.55px;font-weight:400;-webkit-text-stroke:0.75px;color:#ffffff;transform:scaleX(1.0514)">Fake Account</div>
<div class="t" style="left:2697.6px;top:378.7px;font-size:23.55px;font-weight:400;-webkit-text-stroke:0.75px;color:#ffffff;transform:scaleX(1.1034)">Creation</div>
<div class="t" style="left:2696.8px;top:495.5px;font-size:21.8px;font-weight:400;-webkit-text-stroke:0.61px;color:#1e3f57;transform:scaleX(1.0769)">Moderate</div>
<div class="t" style="left:2731.9px;top:530.0px;font-size:18.9px;font-weight:400;color:#333333;transform:scaleX(1.0349)">-42%</div>
<div class="t" style="left:2697.9px;top:622.3px;font-size:32.7px;font-weight:400;-webkit-text-stroke:0.72px;color:#3a3a3a;transform:scaleX(0.9796)">55,017</div>
<div class="t" style="left:501.1px;top:931.7px;font-size:17.44px;font-weight:400;color:#5f6368;transform:scaleX(0.8919)">125k</div>
<div class="t" style="left:497.7px;top:1027.2px;font-size:17.44px;font-weight:400;color:#5f6368;transform:scaleX(0.9811)">100k</div>
<div class="t" style="left:507.0px;top:1121.7px;font-size:17.44px;font-weight:400;color:#5f6368;transform:scaleX(1.0000)">75k</div>
<div class="t" style="left:507.0px;top:1214.7px;font-size:17.44px;font-weight:400;color:#5f6368;transform:scaleX(1.0000)">50k</div>
<div class="t" style="left:507.0px;top:1308.7px;font-size:17.44px;font-weight:400;color:#5f6368;transform:scaleX(1.0000)">25k</div>
<div class="t" style="left:523.8px;top:1403.1px;font-size:17.44px;font-weight:400;color:#5f6368;transform:scaleX(1.2500)">0</div>
<div class="t" style="left:2678.0px;top:952.8px;font-size:21.08px;font-weight:400;color:#b3b3b3;transform:scaleX(0.8683)">Total Threat Requests</div>
<div class="t" style="left:601.0px;top:1295.2px;font-size:17.88px;font-weight:400;-webkit-text-stroke:0.80px;color:#ffffff;transform:scaleX(0.9765)">DDOS-2c3</div>
<div class="t" style="left:769.0px;top:1297.9px;font-size:17.88px;font-weight:400;-webkit-text-stroke:0.80px;color:#ffffff;transform:scaleX(0.9327)">API-jix</div>
<div class="t" style="left:852.0px;top:1255.2px;font-size:17.88px;font-weight:400;-webkit-text-stroke:0.80px;color:#ffffff;transform:scaleX(0.9676)">CRED-4li</div>
<div class="t" style="left:929.8px;top:1109.6px;font-size:17.88px;font-weight:400;-webkit-text-stroke:0.80px;color:#ffffff;transform:scaleX(0.9629)">DDOS-wgn</div>
<div class="t" style="left:881.1px;top:1303.2px;font-size:17.88px;font-weight:400;-webkit-text-stroke:0.80px;color:#ffffff;transform:scaleX(0.9368)">SCRAP-ekk</div>
<div class="t" style="left:988.1px;top:1297.2px;font-size:17.88px;font-weight:400;-webkit-text-stroke:0.80px;color:#ffffff;transform:scaleX(0.9412)">DDOS-z7u</div>
<div class="t" style="left:1115.0px;top:1292.2px;font-size:17.88px;font-weight:400;-webkit-text-stroke:0.80px;color:#ffffff;transform:scaleX(0.9593)">DDOS-aue</div>
<div class="t" style="left:1221.7px;top:1247.2px;font-size:17.88px;font-weight:400;-webkit-text-stroke:0.80px;color:#ffffff;transform:scaleX(0.9862)">VULN-wb4</div>
<div class="t" style="left:1358.1px;top:1221.7px;font-size:17.88px;font-weight:400;-webkit-text-stroke:0.80px;color:#ffffff;transform:scaleX(0.9125)">DDOS-1jn</div>
<div class="t" style="left:1449.7px;top:1244.2px;font-size:17.88px;font-weight:400;-webkit-text-stroke:0.80px;color:#ffffff;transform:scaleX(0.9458)">SCAL-6lr</div>
<div class="t" style="left:1541.0px;top:1282.7px;font-size:17.88px;font-weight:400;-webkit-text-stroke:0.80px;color:#ffffff;transform:scaleX(0.9506)">DDOS-tnu</div>
<div class="t" style="left:1631.0px;top:1217.2px;font-size:17.88px;font-weight:400;-webkit-text-stroke:0.80px;color:#ffffff;transform:scaleX(0.9563)">CRED-i0h</div>
<div class="t" style="left:1684.6px;top:1287.2px;font-size:17.88px;font-weight:400;-webkit-text-stroke:0.80px;color:#ffffff;transform:scaleX(0.9250)">PAYFR-smm</div>
<div class="t" style="left:1830.0px;top:1301.6px;font-size:17.88px;font-weight:400;-webkit-text-stroke:0.80px;color:#ffffff;transform:scaleX(0.9658)">DDOS-rlg</div>
<div class="t" style="left:1960.0px;top:1293.6px;font-size:17.88px;font-weight:400;-webkit-text-stroke:0.80px;color:#ffffff;transform:scaleX(0.9767)">DDOS-b4h</div>
<div class="t" style="left:2006.0px;top:1251.7px;font-size:17.88px;font-weight:400;-webkit-text-stroke:0.80px;color:#ffffff;transform:scaleX(0.9529)">DDOS-xka</div>
<div class="t" style="left:2063.7px;top:1091.9px;font-size:17.88px;font-weight:400;-webkit-text-stroke:0.80px;color:#ffffff;transform:scaleX(0.9802)">DDOS-3e0</div>
</body></html>
